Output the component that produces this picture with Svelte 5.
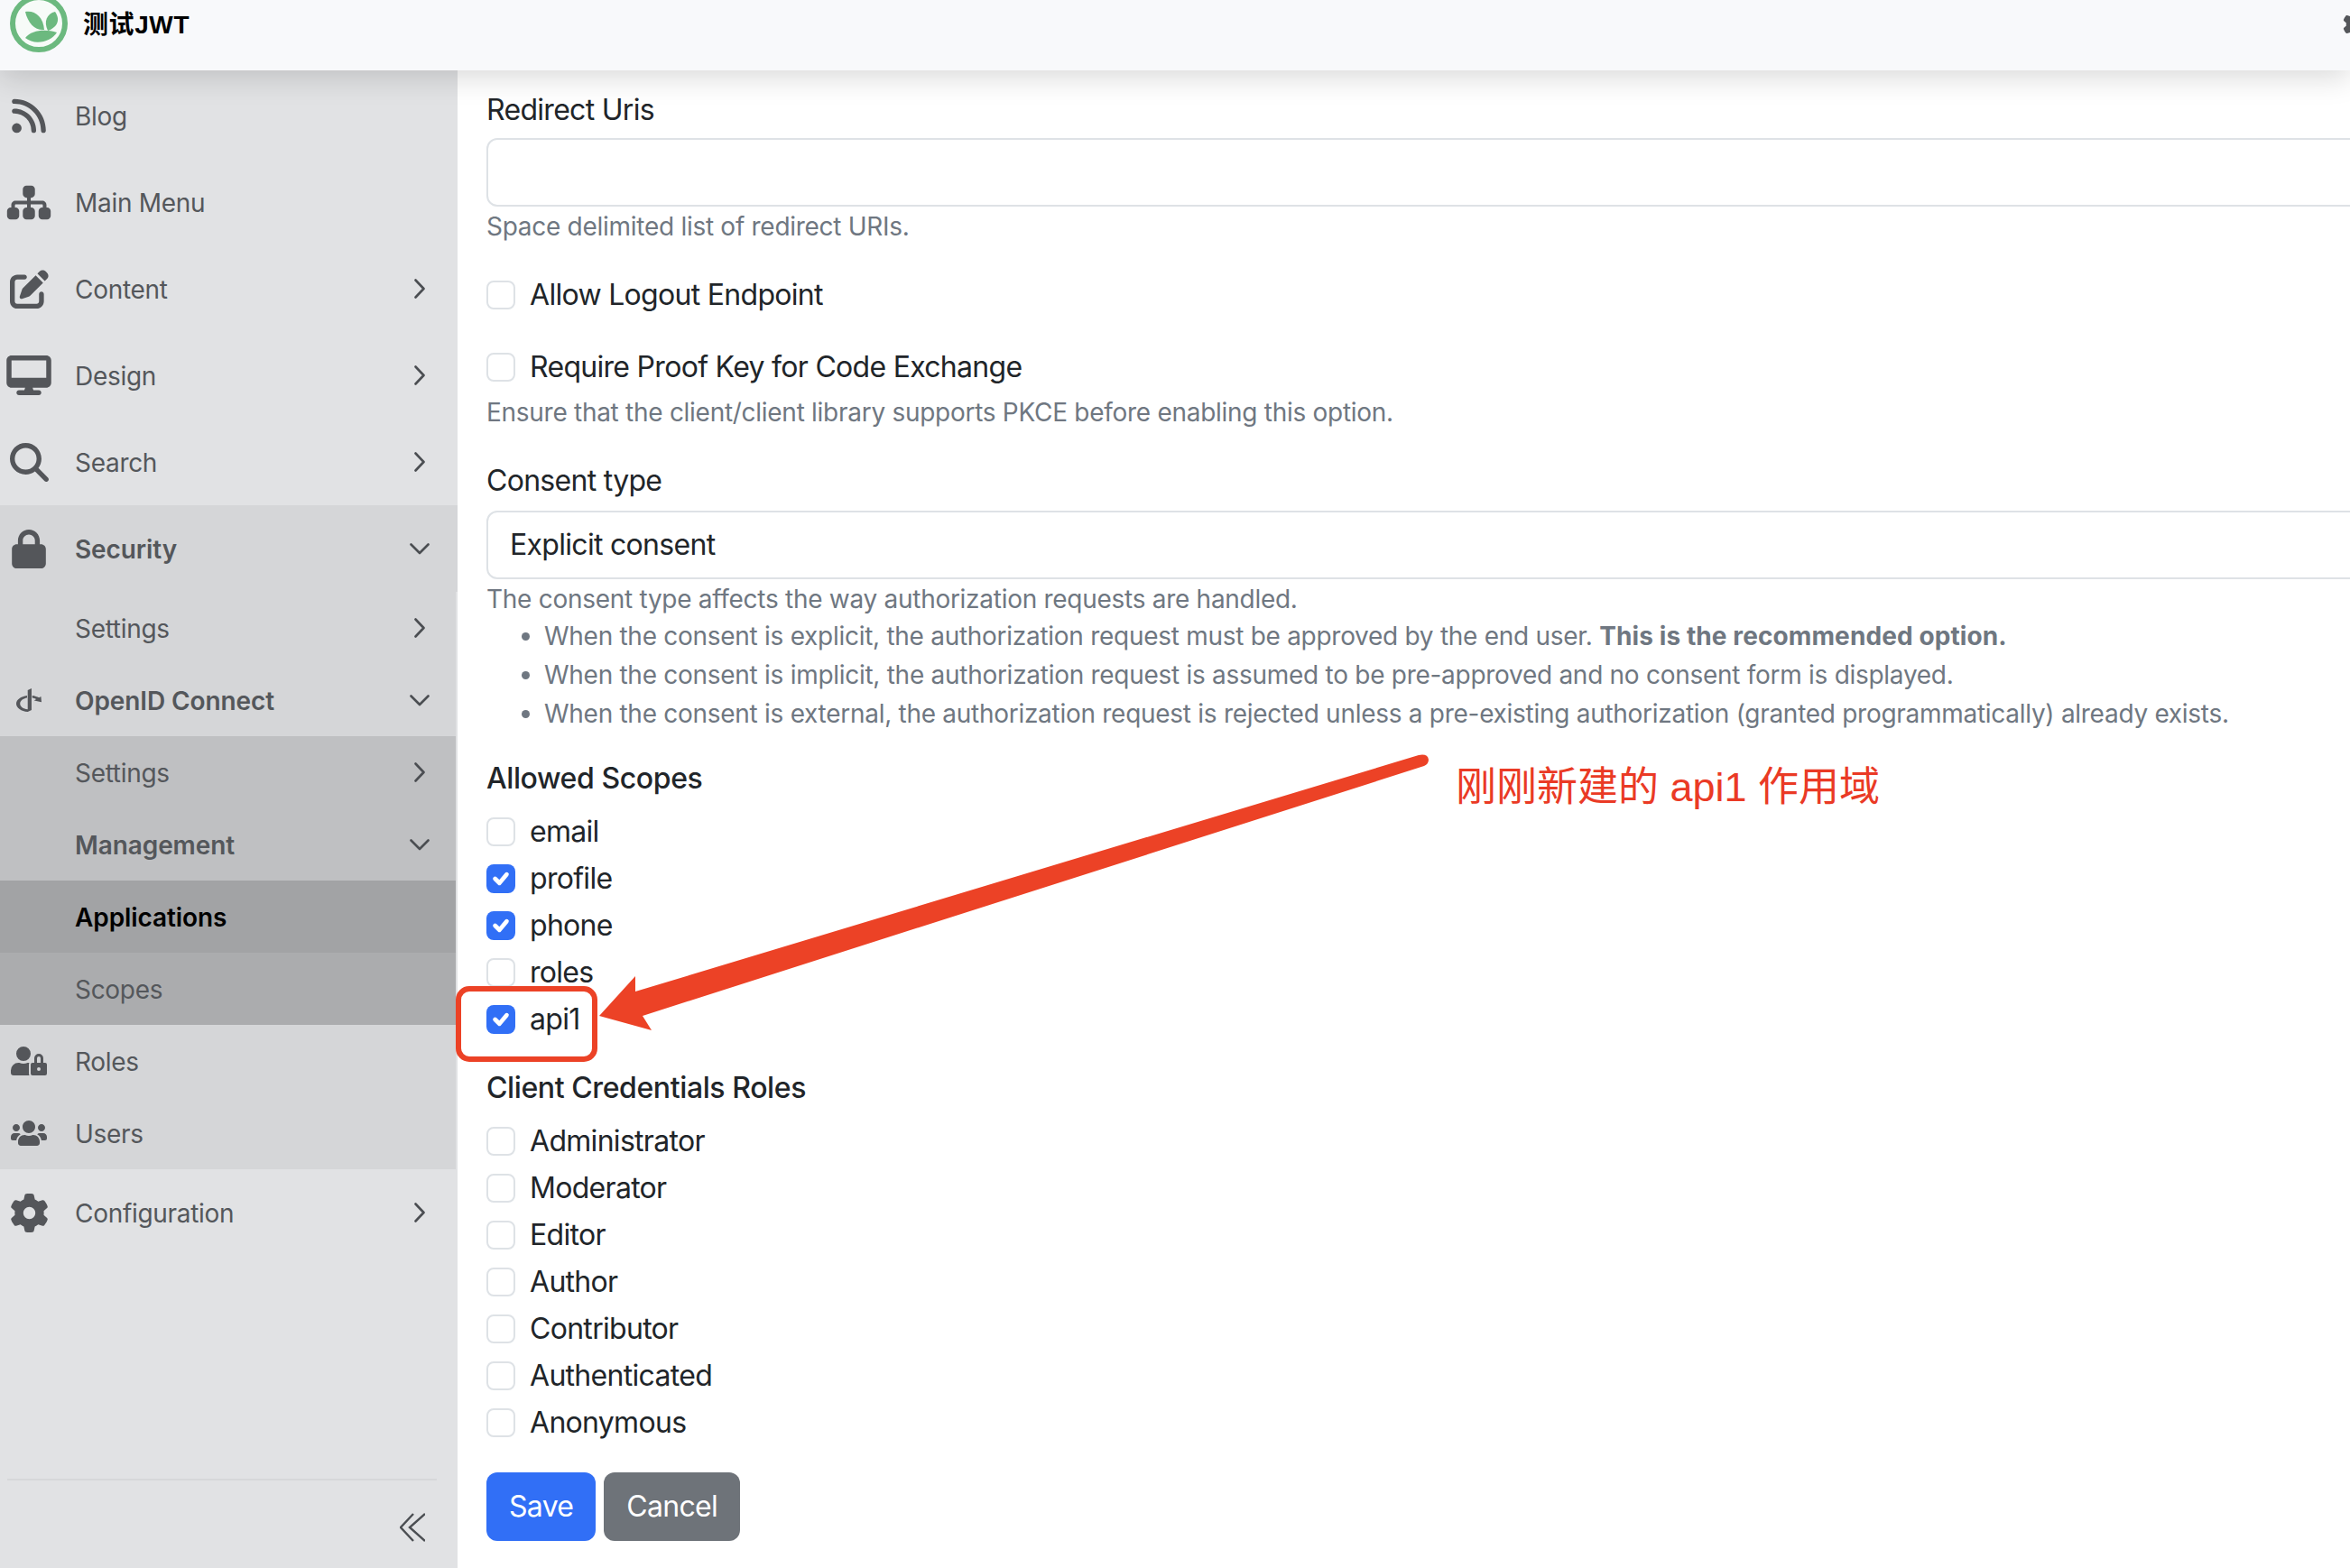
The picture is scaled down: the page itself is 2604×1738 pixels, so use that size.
<script>
	const icons = {
		rss: { w: 38, h: 43, box: '0 0 448 512', d: 'M0 64C0 46.3 14.3 32 32 32c229.8 0 416 186.2 416 416c0 17.7-14.3 32-32 32s-32-14.3-32-32C384 253.6 226.4 96 32 96C14.3 96 0 81.7 0 64zM0 416a64 64 0 1 1 128 0A64 64 0 1 1 0 416zM32 160c159.1 0 288 128.9 288 288c0 17.7-14.3 32-32 32s-32-14.3-32-32c0-123.7-100.3-224-224-224c-17.7 0-32-14.3-32-32s14.3-32 32-32z' },
		sitemap: { w: 50, h: 43, box: '0 0 576 512', d: 'M208 80c0-26.5 21.5-48 48-48h64c26.5 0 48 21.5 48 48v64c0 26.5-21.5 48-48 48h-8v40H464c30.9 0 56 25.1 56 56v32h8c26.5 0 48 21.5 48 48v64c0 26.5-21.5 48-48 48H464c-26.5 0-48-21.5-48-48V368c0-26.5 21.5-48 48-48h8V288c0-4.4-3.6-8-8-8H312v40h8c26.5 0 48 21.5 48 48v64c0 26.5-21.5 48-48 48H256c-26.5 0-48-21.5-48-48V368c0-26.5 21.5-48 48-48h8V280H112c-4.4 0-8 3.6-8 8v32h8c26.5 0 48 21.5 48 48v64c0 26.5-21.5 48-48 48H48c-26.5 0-48-21.5-48-48V368c0-26.5 21.5-48 48-48h8V288c0-30.9 25.1-56 56-56H264V192h-8c-26.5 0-48-21.5-48-48V80z' },
		edit: { w: 43, h: 43, box: '0 0 512 512', d: 'M471.6 21.7c-21.9-21.9-57.3-21.9-79.2 0L362.3 51.7l97.9 97.9 30.1-30.1c21.9-21.9 21.9-57.3 0-79.2L471.6 21.7zm-299.2 220c-6.1 6.1-10.8 13.6-13.5 21.9l-29.6 88.8c-2.9 8.6-.6 18.1 5.8 24.6s15.9 8.7 24.6 5.8l88.8-29.6c8.2-2.7 15.7-7.4 21.9-13.5L437.7 172.3 339.7 74.3 172.4 241.7zM96 64C43 64 0 107 0 160V416c0 53 43 96 96 96H352c53 0 96-43 96-96V320c0-17.7-14.3-32-32-32s-32 14.3-32 32v96c0 17.7-14.3 32-32 32H96c-17.7 0-32-14.3-32-32V160c0-17.7 14.3-32 32-32h96c17.7 0 32-14.3 32-32s-14.3-32-32-32H96z' },
		desktop: { w: 50, h: 44, box: '0 0 576 512', d: 'M64 0C28.7 0 0 28.7 0 64V352c0 35.3 28.7 64 64 64H240l-10.7 32H160c-17.7 0-32 14.3-32 32s14.3 32 32 32H416c17.7 0 32-14.3 32-32s-14.3-32-32-32H346.7L336 416H512c35.3 0 64-28.7 64-64V64c0-35.3-28.7-64-64-64H64zM512 64V288H64V64H512z' },
		search: { w: 43, h: 43, box: '0 0 512 512', d: 'M416 208c0 45.9-14.9 88.3-40 122.7L502.6 457.4c12.5 12.5 12.5 32.8 0 45.3s-32.8 12.5-45.3 0L330.7 376c-34.4 25.2-76.8 40-122.7 40C93.1 416 0 322.9 0 208S93.1 0 208 0S416 93.1 416 208zM208 352a144 144 0 1 0 0-288 144 144 0 1 0 0 288z' },
		lock: { w: 38, h: 43, box: '0 0 448 512', d: 'M144 144v48H304V144c0-44.2-35.8-80-80-80s-80 35.8-80 80zM80 192V144C80 64.5 144.5 0 224 0s144 64.5 144 144v48h16c35.3 0 64 28.7 64 64V448c0 35.3-28.7 64-64 64H64c-35.3 0-64-28.7-64-64V256c0-35.3 28.7-64 64-64H80z' },
		openid: { w: 28, h: 32, box: '0 0 448 512', d: 'M271.5 432l-68 32C88.5 453.7 0 392.5 0 318.2c0-71.5 82.5-131 191.7-144.2v43c-71.5 12.5-124 53-124 101.2 0 51 58.5 93.3 135.7 103v-340l68-33.2v384zM448 291l-131.3-28.5 36.8-20.7c-19.5-11.5-43.5-20-70-24.8v-43c46.2 5.5 87.7 19.5 120.3 39.3l35-19.8L448 291z' },
		roles: { w: 40, h: 32, box: '0 0 640 512', d: 'M224 256A128 128 0 1 0 96 128a128 128 0 0 0 128 128zm96 64a63.08 63.08 0 0 1 8.1-30.5c-4.8-.5-9.5-1.5-14.5-1.5h-16.7a174.08 174.08 0 0 1-145.8 0h-16.7A134.43 134.43 0 0 0 0 422.4V464a48 48 0 0 0 48 48h280.9a63.54 63.54 0 0 1-8.9-32zm288-32h-32v-80a80 80 0 0 0-160 0v80h-32a32 32 0 0 0-32 32v160a32 32 0 0 0 32 32h224a32 32 0 0 0 32-32V320a32 32 0 0 0-32-32zM496 432a32 32 0 1 1 32-32 32 32 0 0 1-32 32zm32-144h-64v-80a32 32 0 0 1 64 0z' },
		users: { w: 40, h: 32, box: '0 0 640 512', d: 'M96 224c35.3 0 64-28.7 64-64s-28.7-64-64-64-64 28.7-64 64 28.7 64 64 64zm448 0c35.3 0 64-28.7 64-64s-28.7-64-64-64-64 28.7-64 64 28.7 64 64 64zm32 32h-64c-17.6 0-33.5 7.1-45.1 18.6 40.3 22.1 68.9 62 75.1 109.4h66c17.7 0 32-14.3 32-32v-32c0-35.3-28.7-64-64-64zm-256 0c61.9 0 112-50.1 112-112S381.9 32 320 32 208 82.1 208 144s50.1 112 112 112zm76.8 32h-8.3c-20.8 10-43.9 16-68.5 16s-47.6-6-68.5-16h-8.3C179.6 288 128 339.6 128 403.2V432c0 26.5 21.5 48 48 48h288c26.5 0 48-21.5 48-48v-28.8c0-63.6-51.6-115.2-115.2-115.2zm-223.7-13.4C161.5 263.1 145.6 256 128 256H64c-35.3 0-64 28.7-64 64v32c0 17.7 14.3 32 32 32h65.9c6.3-47.4 34.9-87.3 75.2-109.4z' },
		gear: { w: 43, h: 43, box: '0 0 512 512', d: 'M495.9 166.6c3.2 8.7 .5 18.4-6.4 24.6l-43.3 39.4c1.1 8.3 1.7 16.8 1.7 25.4s-.6 17.1-1.7 25.4l43.3 39.4c6.9 6.2 9.6 15.9 6.4 24.6c-4.4 11.9-9.7 23.3-15.8 34.3l-4.7 8.1c-6.6 11-14 21.4-22.1 31.2c-5.9 7.2-15.7 9.6-24.5 6.8l-55.7-17.7c-13.4 10.3-28.2 18.9-44 25.4l-12.5 57.1c-2 9.1-9 16.3-18.2 17.8c-13.8 2.3-28 3.5-42.5 3.5s-28.7-1.2-42.5-3.5c-9.2-1.5-16.2-8.7-18.2-17.8l-12.5-57.1c-15.8-6.5-30.6-15.1-44-25.4L83.1 425.9c-8.8 2.8-18.6 .3-24.5-6.8c-8.1-9.8-15.5-20.2-22.1-31.2l-4.7-8.1c-6.1-11-11.4-22.4-15.8-34.3c-3.2-8.7-.5-18.4 6.4-24.6l43.3-39.4C64.6 273.1 64 264.6 64 256s.6-17.1 1.7-25.4L22.4 191.2c-6.9-6.2-9.6-15.9-6.4-24.6c4.4-11.9 9.7-23.3 15.8-34.3l4.7-8.1c6.6-11 14-21.4 22.1-31.2c5.9-7.2 15.7-9.6 24.5-6.8l55.7 17.7c13.4-10.3 28.2-18.9 44-25.4l12.5-57.1c2-9.1 9-16.3 18.2-17.8C227.3 1.2 241.5 0 256 0s28.7 1.2 42.5 3.5c9.2 1.5 16.2 8.7 18.2 17.8l12.5 57.1c15.8 6.5 30.6 15.1 44 25.4l55.7-17.7c8.8-2.8 18.6-.3 24.5 6.8c8.1 9.8 15.5 20.2 22.1 31.2l4.7 8.1c6.1 11 11.4 22.4 15.8 34.3zM256 336a80 80 0 1 0 0-160 80 80 0 1 0 0 160z' }
	};

	// tone: background band, kind: row height, chevron: right/down
	const menu = [
		{ label: 'Blog', icon: 'rss', kind: 'top' },
		{ label: 'Main Menu', icon: 'sitemap', kind: 'top' },
		{ label: 'Content', icon: 'edit', kind: 'top', chevron: 'right' },
		{ label: 'Design', icon: 'desktop', kind: 'top', chevron: 'right' },
		{ label: 'Search', icon: 'search', kind: 'top', chevron: 'right' },
		{ label: 'Security', icon: 'lock', kind: 'top', chevron: 'down', bold: true, tone: 'open' },
		{ label: 'Settings', kind: 'sub', chevron: 'right', tone: 'open' },
		{ label: 'OpenID Connect', icon: 'openid', kind: 'sub', chevron: 'down', bold: true, tone: 'open' },
		{ label: 'Settings', kind: 'sub', chevron: 'right', tone: 'deep' },
		{ label: 'Management', kind: 'sub', chevron: 'down', bold: true, tone: 'deep' },
		{ label: 'Applications', kind: 'sub', bold: true, tone: 'active' },
		{ label: 'Scopes', kind: 'sub', tone: 'deeper' },
		{ label: 'Roles', icon: 'roles', kind: 'sub', tone: 'open' },
		{ label: 'Users', icon: 'users', kind: 'sub', tone: 'open' },
		{ label: 'Configuration', icon: 'gear', kind: 'top', chevron: 'right' }
	];

	const scopes = [
		{ label: 'email' },
		{ label: 'profile', checked: true },
		{ label: 'phone', checked: true },
		{ label: 'roles' },
		{ label: 'api1', checked: true }
	];

	const roles = ['Administrator', 'Moderator', 'Editor', 'Author', 'Contributor', 'Authenticated', 'Anonymous'];
</script>

{#snippet check(label, checked)}
	<div class="check-row">
		<span class="box" class:checked>
			{#if checked}
				<svg viewBox="0 0 20 20" width="32" height="32"><path d="M6 10l3 3 5-6" fill="none" stroke="#fff" stroke-width="3" stroke-linecap="round" stroke-linejoin="round" /></svg>
			{/if}
		</span>
		<span>{label}</span>
	</div>
{/snippet}

<div class="page">
	<header class="topbar">
		<svg class="logo" viewBox="0 0 64 64" width="64" height="64">
			<circle cx="32" cy="32" r="29" fill="#f7fbf8" stroke="#6cb97f" stroke-width="6" />
			<path d="M17 19C27 17 37 24 38 39 28 40 20 32 17 19z" fill="#6cb97f" />
			<path d="M50 19C41 21 37 30 42 40 51 37 57 29 50 19z" fill="#6cb97f" />
			<path d="M17 48C24 39 40 38 52 42 46 52 28 57 17 48z" fill="#6cb97f" />
		</svg>
		<span class="brand">测试JWT</span>
		<svg class="top-gear" viewBox={icons.gear.box} width="30" height="30"><path d={icons.gear.d} /></svg>
	</header>

	<div class="body">
		<aside class="sidebar">
			<nav>
				{#each menu as item}
					<div class="row {item.kind} {item.tone ?? ''}" class:bold={item.bold}>
						<span class="slot">
							{#if item.icon}
								<svg viewBox={icons[item.icon].box} width={icons[item.icon].w} height={icons[item.icon].h}><path d={icons[item.icon].d} /></svg>
							{/if}
						</span>
						<span class="label">{item.label}</span>
						{#if item.chevron === 'right'}
							<svg class="chev" viewBox="0 0 12 22" width="12" height="22"><path d="M1.5 1.5L10.5 11 1.5 20.5" /></svg>
						{:else if item.chevron === 'down'}
							<svg class="chev down" viewBox="0 0 22 13" width="22" height="13"><path d="M1.5 1.5L11 11 20.5 1.5" /></svg>
						{/if}
					</div>
				{/each}
			</nav>
			<div class="side-foot">
				<svg viewBox="0 0 28 32" width="28" height="32"><path d="M15 1L1 16l14 15M28 1L11 16l17 15" /></svg>
			</div>
		</aside>

		<main class="main">
			<label class="field-label first">Redirect Uris</label>
			<div class="control"></div>
			<p class="help flush">Space delimited list of redirect URIs.</p>

			<div class="spaced">{@render check('Allow Logout Endpoint')}</div>
			<div class="spaced">{@render check('Require Proof Key for Code Exchange')}</div>
			<p class="help after-check">Ensure that the client/client library supports PKCE before enabling this option.</p>

			<label class="field-label consent">Consent type</label>
			<div class="control select">Explicit consent</div>
			<p class="help under-select">The consent type affects the way authorization requests are handled.</p>
			<ul class="help notes">
				<li>When the consent is explicit, the authorization request must be approved by the end user. <strong>This is the recommended option.</strong></li>
				<li>When the consent is implicit, the authorization request is assumed to be pre-approved and no consent form is displayed.</li>
				<li>When the consent is external, the authorization request is rejected unless a pre-existing authorization (granted programmatically) already exists.</li>
			</ul>

			<div class="group-title scopes-title">Allowed Scopes</div>
			<div class="checks">
				{#each scopes as s}
					{@render check(s.label, s.checked)}
				{/each}
			</div>

			<div class="group-title roles-title">Client Credentials Roles</div>
			<div class="checks">
				{#each roles as r}
					{@render check(r)}
				{/each}
			</div>

			<div class="actions">
				<button class="btn save">Save</button>
				<button class="btn cancel">Cancel</button>
			</div>
		</main>
	</div>

	<!-- screenshot annotation drawn over the page -->
	<svg class="markup" viewBox="0 0 2604 1738" width="2604" height="1738">
		<path d="M664 1126L704 1082 704 1099 1572 837Q1582 835 1583 842 1583 847 1578 849L712 1126 722 1142Z" fill="#ec4226" />
		<rect x="508" y="1096" width="151" height="78" rx="12" fill="none" stroke="#ec4226" stroke-width="6" />
	</svg>
	<div class="note">刚刚新建的 api1 作用域</div>
</div>

<style>
	:global(body) {
		margin: 0;
		background: #fff;
	}

	.page {
		position: relative;
		width: 2604px;
		height: 1738px;
		overflow: hidden;
		display: flex;
		flex-direction: column;
		font-family: Inter, 'Noto Sans CJK SC', sans-serif;
		color: #212529;
		background: #fff;
	}

	.topbar {
		position: relative;
		z-index: 2;
		flex: none;
		height: 78px;
		display: flex;
		align-items: flex-start;
		background: #f8f9fb;
		box-shadow: 0 8px 32px rgba(0, 0, 0, 0.15);
		padding-left: 11px;
	}

	.logo {
		flex: none;
		margin-top: -6px;
	}

	.brand {
		margin: 8px 0 0 17px;
		font-family: 'Liberation Sans', 'Noto Sans CJK SC', sans-serif;
		font-size: 28px;
		line-height: 40px;
		font-weight: 700;
		letter-spacing: 0.6px;
		color: #000;
	}

	.top-gear {
		margin: 12px -22px 0 auto;
		fill: #54565a;
	}

	.body {
		flex: 1;
		display: flex;
		min-height: 0;
	}

	.sidebar {
		flex: none;
		width: 507px;
		display: flex;
		flex-direction: column;
		justify-content: space-between;
		background: #e1e2e4;
		padding-top: 2px;
		box-sizing: border-box;
	}

	.row {
		display: flex;
		align-items: center;
		width: 505px;
		box-sizing: border-box;
		padding-right: 31px;
		font-size: 28px;
		letter-spacing: -0.3px;
		color: #54575b;
	}

	.row.top {
		height: 96px;
		width: 507px;
		padding-right: 33px;
	}

	.row.sub {
		height: 80px;
	}

	.row.open {
		background: #d5d6d8;
	}

	.row.deep {
		background: #bfc0c2;
	}

	.row.deeper {
		background: #abacae;
	}

	.row.active {
		background: #a2a3a5;
		color: #000;
	}

	.bold {
		font-weight: 600;
		letter-spacing: 0;
	}

	.row.bold {
		letter-spacing: -0.1px;
	}

	.slot {
		flex: none;
		width: 64px;
		margin-right: 20px;
		display: flex;
		justify-content: center;
		fill: #54565a;
	}

	.label {
		flex: 1;
		margin-left: -1px;
		padding-top: 2px;
	}

	.chev {
		flex: none;
		fill: none;
		stroke: #4b4e52;
		stroke-width: 2.6;
		stroke-linecap: round;
		stroke-linejoin: round;
		margin-right: 3px;
	}

	.chev.down {
		margin-right: -2px;
	}

	.side-foot {
		margin: 0 23px 0 8px;
		height: 99px;
		border-top: 2px solid #d6d7d9;
		box-sizing: border-box;
		display: flex;
		justify-content: flex-end;
		padding-top: 36px;
	}

	.side-foot svg {
		fill: none;
		stroke: #4b4e52;
		stroke-width: 2.4;
		margin-right: 13px;
	}

	.main {
		flex: 1;
		min-width: 0;
		padding: 20px 0 0 32px;
		font-size: 32px;
		line-height: 48px;
		letter-spacing: -0.7px;
	}

	.field-label,
	.group-title {
		display: block;
		height: 48px;
		margin-bottom: 7px;
	}

	.group-title {
		font-weight: 500;
		letter-spacing: -0.4px;
	}

	.consent {
		margin-top: 31px;
		margin-bottom: 9px;
	}

	.control {
		width: 2200px;
		height: 76px;
		box-sizing: border-box;
		border: 2px solid #dee2e6;
		border-radius: 12px;
		background: #fff;
	}

	.select {
		padding: 12px 24px;
		line-height: 48px;
	}

	.help {
		margin: 0;
		font-size: 28px;
		line-height: 42px;
		color: #6f7781;
		letter-spacing: -0.28px;
	}

	.flush {
		margin: 1px 0 -1px;
	}

	.after-check {
		margin-top: 5px;
	}

	.under-select {
		margin-top: 1px;
	}

	.notes {
		list-style: disc;
		margin-top: -1px;
		padding-left: 64px;
	}

	.notes li {
		height: 43px;
	}

	.notes strong {
		letter-spacing: 0.1px;
	}

	.spaced {
		margin-top: 32px;
	}

	.check-row {
		display: flex;
		align-items: center;
		gap: 16px;
		height: 48px;
	}

	.checks .check-row {
		height: 52px;
	}

	.box {
		flex: none;
		width: 32px;
		height: 32px;
		box-sizing: border-box;
		border: 2px solid #dee2e6;
		border-radius: 8px;
		background: #fff;
	}

	.box.checked {
		border: 0;
		background: #316ff6;
	}

	.box svg {
		display: block;
	}

	.scopes-title {
		margin-top: 26px;
		margin-bottom: 9px;
	}

	.roles-title {
		margin-top: 26px;
		margin-bottom: 9px;
	}

	.actions {
		display: flex;
		gap: 9px;
		margin-top: 29px;
	}

	.btn {
		height: 76px;
		border: 0;
		border-radius: 12px;
		padding: 0 25px;
		font: inherit;
		letter-spacing: inherit;
		color: #fff;
	}

	.save {
		background: #316ff6;
	}

	.cancel {
		background: #6e7379;
	}

	.markup {
		position: absolute;
		left: 0;
		top: 0;
		z-index: 3;
		pointer-events: none;
	}

	.note {
		position: absolute;
		z-index: 3;
		left: 1613px;
		top: 843px;
		font-size: 45px;
		line-height: 60px;
		font-family: 'Liberation Sans', 'Noto Sans CJK SC', sans-serif;
		color: #ea3a25;
		white-space: nowrap;
	}
</style>
